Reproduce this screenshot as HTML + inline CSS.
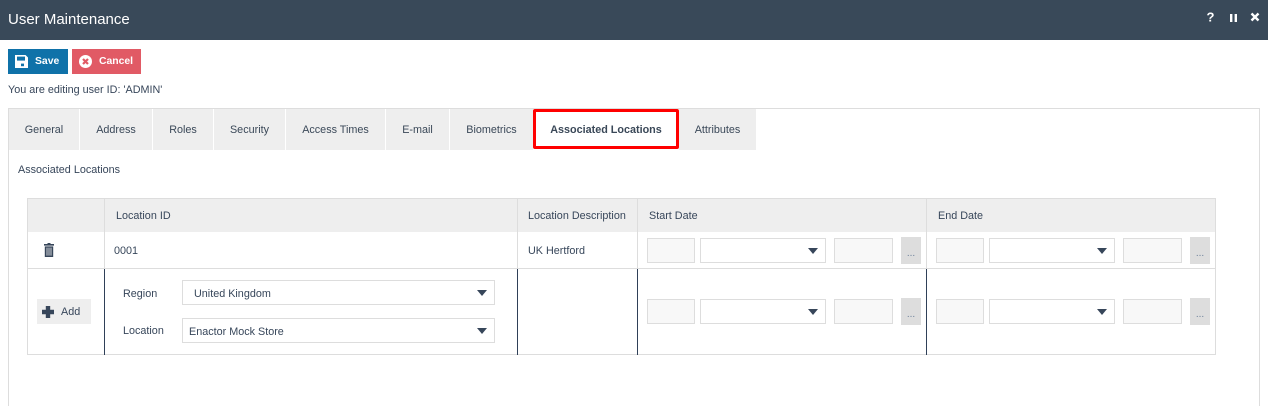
<!DOCTYPE html>
<html><head><meta charset="utf-8">
<style>
html,body{margin:0;padding:0;background:#fff}
html{width:1268px;height:406px;overflow:hidden}
body{width:1268px;height:406px;overflow:hidden;position:relative;font-family:"Liberation Sans",sans-serif;font-size:10.8px;color:#37465a}
.a{position:absolute;box-sizing:border-box}
.t{position:absolute;white-space:nowrap;line-height:14px}
.tab{position:absolute;top:109px;height:41px;background:#eee;line-height:41px;text-align:center;font-size:10.8px;color:#3a4858}
.tab span{position:relative;top:1px}
.in{position:absolute;box-sizing:border-box;height:25px;background:#f8f8f8;border:1px solid #ddd}
.sel{position:absolute;box-sizing:border-box;height:25px;background:#fff;border:1px solid #ddd}
.sel:after{content:"";position:absolute;right:7px;top:9px;border-left:5px solid transparent;border-right:5px solid transparent;border-top:6px solid #37465a}
.dots{position:absolute;box-sizing:border-box;width:20px;height:27px;background:#ddd;text-align:center;color:#6b7f99;font-size:10px;line-height:34px}
.v{position:absolute;width:1px;background:#ddd}
.d{position:absolute;width:1px;background:#2f4058}
.h{position:absolute;height:1px;background:#ddd}
</style></head><body>
<div class="a" style="left:0;top:0;width:1268px;height:40px;background:#394959"></div>
<div class="t" style="left:8px;top:11px;font-size:15px;line-height:18px;color:#fff">User Maintenance</div>
<svg class="a" style="left:1200px;top:8px" width="68" height="20" viewBox="0 0 68 20">
<text x="6.5" y="13.5" font-family="Liberation Sans" font-weight="700" font-size="13" fill="#fff">?</text>
<rect x="30" y="6" width="2.4" height="8" fill="#fff"/><rect x="34.6" y="6" width="2.4" height="8" fill="#fff"/>
<path d="M51.5 5.5l7 7M58.5 5.5l-7 7" stroke="#fff" stroke-width="2.4"/>
</svg>

<div class="a" style="left:8px;top:49px;width:60px;height:25px;background:#0f72a9"></div>
<svg class="a" style="left:15px;top:55px" width="13" height="13" viewBox="0 0 13 13"><path d="M0 0h10.5L13 2.5V13H0z" fill="#fff"/><rect x="2" y="1.6" width="8" height="4" fill="#0f72a9"/><rect x="6" y="8.6" width="3" height="2.6" fill="#0f72a9"/></svg>
<div class="t" style="left:35px;top:55px;color:#fff;font-weight:700;font-size:10.4px">Save</div>
<div class="a" style="left:72px;top:49px;width:69px;height:25px;background:#e15a65"></div>
<svg class="a" style="left:79px;top:55px" width="13" height="13" viewBox="0 0 13 13"><circle cx="6.5" cy="6.5" r="6.5" fill="#fff"/><path d="M4 4l5 5M9 4l-5 5" stroke="#e15a65" stroke-width="2.2"/></svg>
<div class="t" style="left:99px;top:55px;color:#fff;font-weight:700;font-size:10.4px">Cancel</div>
<div class="t" style="left:8px;top:83px;color:#37465a">You are editing user ID: 'ADMIN'</div>

<div class="a" style="left:8px;top:108px;width:1252px;height:298px;border:1px solid #ddd;border-bottom:0"></div>
<div class="tab" style="left:9px;width:70px"><span>General</span></div>
<div class="tab" style="left:80px;width:72px"><span>Address</span></div>
<div class="tab" style="left:153px;width:60px"><span>Roles</span></div>
<div class="tab" style="left:214px;width:71px"><span>Security</span></div>
<div class="tab" style="left:286px;width:99px"><span>Access Times</span></div>
<div class="tab" style="left:386px;width:63px"><span>E-mail</span></div>
<div class="tab" style="left:450px;width:83px"><span>Biometrics</span></div>
<div class="tab" style="left:679px;width:77px"><span>Attributes</span></div>
<div class="a" style="left:533px;top:109px;width:146px;height:40px;background:#fff;border:3px solid #f00;border-radius:2px;text-align:center;line-height:37px;font-weight:700;color:#3a4858">Associated Locations</div>
<div class="t" style="left:18px;top:163px;color:#37465a">Associated Locations</div>

<div class="a" style="left:27px;top:198px;width:1189px;height:157px;border:1px solid #ddd"></div>
<div class="a" style="left:28px;top:199px;width:1187px;height:33px;background:#eee"></div>
<div class="h" style="left:28px;top:268px;width:1187px"></div>
<div class="v" style="left:104px;top:199px;height:69px"></div>
<div class="v" style="left:517px;top:199px;height:69px"></div>
<div class="v" style="left:637px;top:199px;height:69px"></div>
<div class="v" style="left:926px;top:199px;height:69px"></div>
<div class="d" style="left:104px;top:269px;height:86px"></div>
<div class="d" style="left:517px;top:269px;height:86px"></div>
<div class="d" style="left:637px;top:269px;height:86px"></div>
<div class="d" style="left:926px;top:269px;height:86px"></div>

<div class="t" style="left:116px;top:209px">Location ID</div>
<div class="t" style="left:528px;top:209px">Location Description</div>
<div class="t" style="left:649px;top:209px">Start Date</div>
<div class="t" style="left:938px;top:209px">End Date</div>
<div class="t" style="left:114px;top:244px">0001</div>
<div class="t" style="left:528px;top:244px">UK Hertford</div>

<svg class="a" style="left:44px;top:243px" width="10" height="14" viewBox="0 0 10 14"><path d="M3.5 0h3v1H10v1.6H0V1h3.5z" fill="#37465a"/><path d="M.8 3.4h8.4V14H.8z" fill="#37465a"/><path d="M3 4.6v8M5 4.6v8M7 4.6v8" stroke="#fff" stroke-width=".9" opacity=".85"/></svg>

<div class="a" style="left:37px;top:299px;width:54px;height:25px;background:#eee"></div>
<svg class="a" style="left:42px;top:306px" width="12" height="12" viewBox="0 0 12 12"><path d="M3.8 0h4.4v3.8H12v4.4H8.2V12H3.8V8.2H0V3.8h3.8z" fill="#37465a"/></svg>
<div class="t" style="left:61px;top:305px">Add</div>

<div class="t" style="left:123px;top:287px">Region</div>
<div class="t" style="left:123px;top:324px">Location</div>
<div class="sel" style="left:182px;top:280px;width:313px"><span class="t" style="left:11px;top:6px">United Kingdom</span></div>
<div class="sel" style="left:182px;top:318px;width:313px"><span class="t" style="left:6px;top:6px">Enactor Mock Store</span></div>

<div class="in" style="left:647px;top:238px;width:48px"></div>
<div class="sel" style="left:700px;top:238px;width:126px"></div>
<div class="in" style="left:834px;top:238px;width:59px"></div>
<div class="dots" style="left:901px;top:237px">...</div>
<div class="in" style="left:936px;top:238px;width:48px"></div>
<div class="sel" style="left:989px;top:238px;width:126px"></div>
<div class="in" style="left:1123px;top:238px;width:59px"></div>
<div class="dots" style="left:1190px;top:237px">...</div>

<div class="in" style="left:647px;top:299px;width:48px"></div>
<div class="sel" style="left:700px;top:299px;width:126px"></div>
<div class="in" style="left:834px;top:299px;width:59px"></div>
<div class="dots" style="left:901px;top:298px">...</div>
<div class="in" style="left:936px;top:299px;width:48px"></div>
<div class="sel" style="left:989px;top:299px;width:126px"></div>
<div class="in" style="left:1123px;top:299px;width:59px"></div>
<div class="dots" style="left:1190px;top:298px">...</div>
</body></html>
